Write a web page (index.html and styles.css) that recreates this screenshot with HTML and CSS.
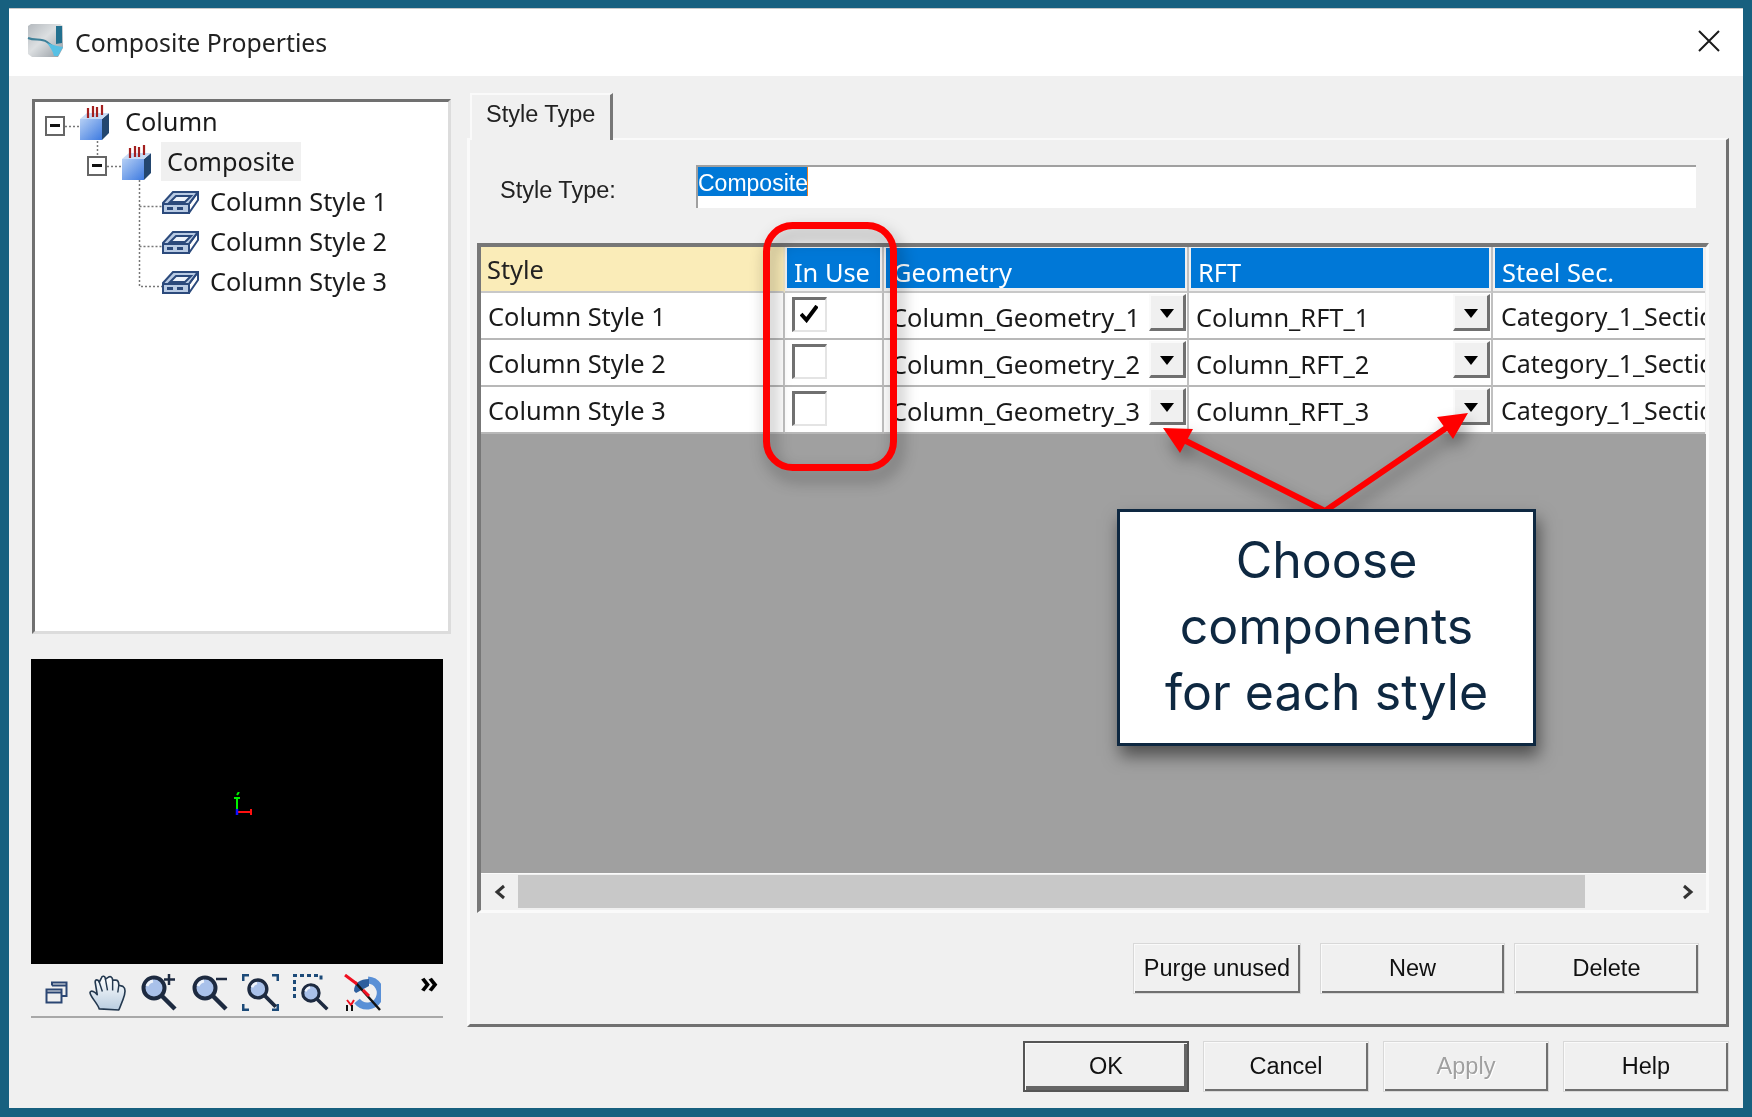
FILE: index.html
```html
<!DOCTYPE html>
<html lang="en">
<head>
<meta charset="utf-8">
<title>Composite Properties</title>
<link rel="stylesheet" href="styles.css">
</head>
<body>
<svg class="defs" width="0" height="0" aria-hidden="true">
  <defs>
    <linearGradient id="cubeFace" x1="0" y1="0" x2="1" y2="1">
      <stop offset="0" stop-color="#b5cff5"/><stop offset="1" stop-color="#3d7ae0"/>
    </linearGradient>
    <linearGradient id="handFill" x1="0" y1="0" x2="0" y2="1">
      <stop offset="0" stop-color="#ffffff"/><stop offset="1" stop-color="#b9cde0"/>
    </linearGradient>
    <linearGradient id="titleFill" x1="0" y1="0" x2="1" y2="1">
      <stop offset="0" stop-color="#b4b9be"/><stop offset=".45" stop-color="#dcdfe1"/><stop offset="1" stop-color="#9299a0"/>
    </linearGradient>
    <symbol id="cube" viewBox="0 0 30 36">
      <path d="M0 14H22V35H0Z" fill="url(#cubeFace)"/>
      <path d="M22 14 29 8V28L22 35Z" fill="#23466f"/>
      <path d="M0 14 7 8H29L22 14Z" fill="#c7dbf5"/>
      <path d="M8 3V13M13 1V12M17 2V12M22 0V10" stroke="#a3201f" stroke-width="2.200" fill="none"/>
    </symbol>
    <symbol id="block" viewBox="0 0 37 23">
      <path d="M1 12 11 1H36L27 13V22H1Z" fill="#b9cbe4" stroke="#2c4a7c" stroke-width="2"/>
      <path d="M27 13H1M27 13 36 1V9L27 22" fill="none" stroke="#2c4a7c" stroke-width="2"/>
      <path d="M8 11 14 5H29L23 11Z" fill="#eef3fa" stroke="#2c4a7c" stroke-width="2"/>
      <path d="M5 16H11V19H5ZM15 16H21V19H15Z" fill="#2c4a7c"/>
    </symbol>
    <symbol id="lens" viewBox="0 0 37 37">
      <circle cx="14" cy="14" r="10.500" fill="#a9c1ea" stroke="#1d2a40" stroke-width="4"/>
      <path d="M7 12A8 8 0 0 1 13 7" stroke="#eef3fb" stroke-width="3" fill="none"/>
      <path d="M22 22 35 35" stroke="#1d2a40" stroke-width="4.500"/>
    </symbol>
  </defs>
</svg>

<main class="window">
  <header class="titlebar">
    <svg class="title-icon" viewBox="0 0 36 35" aria-hidden="true">
      <path d="M1 3 4 1H33L36 3V25L31 34H5L1 31Z" fill="url(#titleFill)"/>
      <path d="M29 3H35V20L29 21Z" fill="#22708f"/>
      <path d="M1 15C8 18 14 15 20 19L28 25" fill="none" stroke="#3d7f98" stroke-width="2"/>
      <path d="M20 20 30 23 36 24 31 33H27C26 28 23 24 20 20Z" fill="#57c0e4"/>
    </svg>
    <h1 class="title-text">Composite Properties</h1>
    <svg class="close-icon" viewBox="0 0 22 22" aria-hidden="true"><path d="M1 1 21 21M21 1 1 21" stroke="#1a1a1a" stroke-width="2"/></svg>
  </header>

  <div class="client">
    <aside class="left-col">
      <div class="tree">
        <svg class="tree-lines" width="200" height="220" viewBox="0 0 200 220" aria-hidden="true">
          <path d="M30 24.500H45M62.500 39V53M72 64.500H87M104.500 78V184.500H127M104.500 104.500H127M104.500 144.500H127" fill="none" stroke="#777" stroke-width="1.500" stroke-dasharray="2 2"/>
        </svg>
        <div class="tree-row level-0">
          <span class="expander"></span>
          <svg class="cube-icon"><use href="#cube"/></svg>
          <span class="tree-label">Column</span>
        </div>
        <div class="tree-row level-1">
          <span class="expander"></span>
          <svg class="cube-icon"><use href="#cube"/></svg>
          <span class="tree-label is-selected">Composite</span>
        </div>
        <div class="tree-row level-2">
          <svg class="block-icon"><use href="#block"/></svg>
          <span class="tree-label">Column Style 1</span>
        </div>
        <div class="tree-row level-2">
          <svg class="block-icon"><use href="#block"/></svg>
          <span class="tree-label">Column Style 2</span>
        </div>
        <div class="tree-row level-2">
          <svg class="block-icon"><use href="#block"/></svg>
          <span class="tree-label">Column Style 3</span>
        </div>
      </div>

      <div class="preview">
        <svg class="axis" viewBox="0 0 40 40" aria-hidden="true">
          <path d="M20 20V6M17 6H23M20 3 22 0" stroke="#00f000" stroke-width="2" fill="none"/>
          <path d="M20 20H34M34 17V23" stroke="#ff1010" stroke-width="2" fill="none"/>
          <path d="M20 17V23" stroke="#1010ff" stroke-width="2.500" fill="none"/>
        </svg>
      </div>

      <div class="toolbar">
        <svg class="tool tool-restore" viewBox="0 0 23 23" aria-hidden="true">
          <path d="M1.500 8.500H16.500V21.500H1.500ZM1.500 11.500H16.500M7 4.500V1.500H21.500V15H17M7 4.500H21.500" fill="none" stroke="#2b4673" stroke-width="2"/>
        </svg>
        <svg class="tool tool-hand" viewBox="0 0 36 36" aria-hidden="true">
          <path d="M10 34C8 28 1 22 1 18C2 15 6 18 8 20L6 8C6 5 9 5 10 8L12 4C13 1 16 2 16 5L19 3C21 2 23 3 23 6L26 6C29 6 29 9 29 11L33 12C36 14 35 20 33 25C31 30 30 33 29 35Z" fill="url(#handFill)" stroke="#23384f" stroke-width="1.600" stroke-linejoin="round"/>
          <path d="M10 8 13 17M16 5 18 16M23 6 23 16M29 11 28 18" fill="none" stroke="#23384f" stroke-width="1.400"/>
        </svg>
        <svg class="tool" viewBox="0 0 37 37" aria-hidden="true">
          <use href="#lens"/><path d="M29 0V11M24 5.500H35" stroke="#1d2a40" stroke-width="2.500"/>
        </svg>
        <svg class="tool" viewBox="0 0 37 37" aria-hidden="true">
          <use href="#lens"/><path d="M25 5H36" stroke="#1d2a40" stroke-width="2.500"/>
        </svg>
        <svg class="tool" viewBox="0 0 37 37" aria-hidden="true">
          <path d="M1 7V1H7M30 1H36V7M1 30V36H7M30 36H36V30" fill="none" stroke="#1c4a78" stroke-width="3"/>
          <g transform="translate(4 3) scale(.85)"><use href="#lens" width="37" height="37"/></g>
        </svg>
        <svg class="tool" viewBox="0 0 37 37" aria-hidden="true">
          <path d="M1.500 24V1.500H28V8" fill="none" stroke="#1c4a78" stroke-width="3" stroke-dasharray="4 3"/>
          <g transform="translate(7 8) scale(.78)"><use href="#lens" width="37" height="37"/></g>
        </svg>
        <svg class="tool" viewBox="0 0 37 37" aria-hidden="true">
          <path d="M24 6A13 13 0 1 1 13 27" fill="none" stroke="#5a90d6" stroke-width="7"/>
          <path d="M10 17C10 9 16 5 25 5V12L12 19Z" fill="#2d5f9e"/>
          <path d="M11 8 36 36" stroke="#111" stroke-width="2.500"/>
          <path d="M1 1 13 10M19 16 25 22" stroke="#f01020" stroke-width="3"/>
          <path d="M3 26 7 31 10 26" stroke="#f01020" stroke-width="2" fill="none"/>
          <path d="M3 31V37M8 31V37" stroke="#111" stroke-width="2"/>
        </svg>
        <span class="chevrons">&#187;</span>
      </div>
    </aside>

    <section class="right-col">
      <div class="tab-strip"><span class="tab">Style Type</span></div>
      <div class="tab-page">
        <div class="field-row">
          <label class="field-label">Style Type:</label>
          <div class="field"><span class="field-sel">Composite</span></div>
        </div>

        <div class="grid-box">
          <div class="grid-table">
            <div class="head head-fixed">Style</div>
            <div class="head"><span class="head-fill">In Use</span></div>
            <div class="head"><span class="head-fill">Geometry</span></div>
            <div class="head"><span class="head-fill">RFT</span></div>
            <div class="head head-last"><span class="head-fill">Steel Sec.</span></div>

            <div class="cell cell-name">Column Style 1</div>
            <div class="cell"><span class="check is-on"><svg viewBox="3 3 18 18" aria-hidden="true"><path d="M4 12 9.500 18 20 4" fill="none" stroke="#000" stroke-width="4"/></svg></span></div>
            <div class="cell cell-combo"><span class="combo-text clipped"><span>Column_Geometry_1</span></span><span class="drop"></span></div>
            <div class="cell cell-combo"><span class="combo-text">Column_RFT_1</span><span class="drop"></span></div>
            <div class="cell cell-last"><span class="cat-text">Category_1_Section</span></div>

            <div class="cell cell-name">Column Style 2</div>
            <div class="cell"><span class="check"></span></div>
            <div class="cell cell-combo"><span class="combo-text clipped"><span>Column_Geometry_2</span></span><span class="drop"></span></div>
            <div class="cell cell-combo"><span class="combo-text">Column_RFT_2</span><span class="drop"></span></div>
            <div class="cell cell-last"><span class="cat-text">Category_1_Section</span></div>

            <div class="cell cell-name">Column Style 3</div>
            <div class="cell"><span class="check"></span></div>
            <div class="cell cell-combo"><span class="combo-text clipped"><span>Column_Geometry_3</span></span><span class="drop"></span></div>
            <div class="cell cell-combo"><span class="combo-text">Column_RFT_3</span><span class="drop"></span></div>
            <div class="cell cell-last"><span class="cat-text">Category_1_Section</span></div>
          </div>
          <div class="grid-empty"></div>
          <div class="scrollbar">
            <span class="scroll-btn"><svg viewBox="0 0 12 16" aria-hidden="true"><path d="M10 2 3 8 10 14" fill="none" stroke="#333" stroke-width="3"/></svg></span>
            <span class="scroll-thumb"></span>
            <span class="scroll-btn"><svg viewBox="0 0 12 16" aria-hidden="true"><path d="M2 2 9 8 2 14" fill="none" stroke="#333" stroke-width="3"/></svg></span>
          </div>
        </div>

        <div class="page-actions">
          <button class="btn btn-purge">Purge unused</button>
          <button class="btn btn-wide">New</button>
          <button class="btn btn-wide">Delete</button>
        </div>
      </div>

      <div class="dialog-actions">
        <button class="btn btn-dlg btn-default">OK</button>
        <button class="btn btn-dlg">Cancel</button>
        <button class="btn btn-dlg is-disabled">Apply</button>
        <button class="btn btn-dlg">Help</button>
      </div>
    </section>
  </div>
</main>

<svg class="annot annot-shadow" viewBox="0 0 1752 1117" aria-hidden="true">
  <rect x="766.500" y="225.500" width="127" height="242" rx="26" fill="none" stroke="#ff0000" stroke-width="7"/>
  <path d="M1325 511 1178 437M1325 511 1452 424" fill="none" stroke="#ff0000" stroke-width="6"/>
  <path d="M1163 428 1193 429 1180 453Z M1468 413 1437 417 1453 439Z" fill="#ff0000"/>
</svg>
<div class="callout">Choose<br>components<br>for each style</div>
</body>
</html>
```
FILE: styles.css
```css
* { box-sizing: border-box; }
html, body { margin: 0; height: 100%; }
body {
  background: #17607f;
  padding: 8px 9px 9px;
  width: 1752px;
  height: 1117px;
  overflow: hidden;
  position: relative;
  font-family: "Noto Sans", sans-serif;
  color: #111;
}
.defs { position: absolute; }

.window {
  width: 1734px;
  height: 1100px;
  background: #f0f0f0;
  display: flex;
  flex-direction: column;
  filter: blur(.45px);
}

.titlebar {
  height: 68px;
  flex: none;
  background: #fff;
  border-top: 1px solid #c8c8c8;
  display: flex;
  align-items: center;
  padding: 0 23px 0 18px;
}
.title-icon { width: 36px; height: 35px; margin-right: 12px; margin-top: -4px; }
.title-text { margin: -2px 0 0; font-size: 24.800px; font-weight: 400; flex: 1; color: #222; }
.close-icon { width: 22px; height: 22px; margin-top: -4px; }

.client {
  flex: 1;
  display: grid;
  grid-template-columns: 420px 1259px;
  column-gap: 19px;
  padding: 17px 14px 16px 22px;
}

/* Left column */
.left-col { display: flex; flex-direction: column; }
.tree {
  position: relative;
  height: 535px;
  margin: 6px 0 0 1px;
  background: #fff;
  border: 3px solid #f5f5f5;
  border-top-color: #707070;
  border-left-color: #707070;
  border-right-color: #dcdcdc;
  border-bottom-color: #dcdcdc;
  font-size: 25.300px;
}
.tree-lines { position: absolute; left: 0; top: 0; }
.tree-row { height: 40px; display: flex; align-items: center; position: relative; }
.level-0 { padding-left: 10px; }
.level-1 { padding-left: 52px; }
.level-2 { padding-left: 127px; }
.expander {
  width: 20px;
  height: 20px;
  margin: 8px 15px 0 0;
  border: 2px solid #666;
  background: #fff;
  position: relative;
}
.expander::after {
  content: "";
  position: absolute;
  left: 3px;
  right: 3px;
  top: 6px;
  height: 3px;
  background: #111;
}
.cube-icon { width: 30px; height: 36px; margin-right: 9px; margin-top: 1px; }
.block-icon { width: 37px; height: 23px; margin-right: 5px; }
.tree-label { padding: 0 6px; line-height: 39px; color: #1a1a1a; margin-top: -1px; }
.is-selected { background: #f0f0f0; }

.preview {
  width: 412px;
  height: 305px;
  margin-top: 25px;
  background: #000;
  display: flex;
  align-items: center;
  justify-content: center;
  flex: none;
}
.axis { width: 40px; height: 40px; margin-left: 0; }

.toolbar {
  width: 412px;
  height: 54px;
  border-bottom: 2px solid #a8a8a8;
  display: flex;
  align-items: flex-start;
  padding: 10px 0 0 14px;
  gap: 14px;
  flex: none;
}
.tool { width: 37px; height: 37px; flex: none; }
.tool-restore { width: 23px; height: 23px; margin: 7px 7px 0 0; }
.chevrons { font-size: 30px; line-height: 16px; font-weight: 700; margin-left: 25px; color: #000; }

/* Right column */
.right-col { display: flex; flex-direction: column; }
.tab-strip { height: 45px; display: flex; flex: none; }
.tab {
  width: 143px;
  background: #f0f0f0;
  border: 2px solid #fafafa;
  border-right: 3px solid #777;
  border-bottom: 0;
  font: 23.500px/39px "Liberation Sans", sans-serif;
  padding-left: 14px;
  color: #222;
  position: relative;
  z-index: 1;
  height: 47px;
}
.tab-page {
  height: 889px;
  flex: none;
  margin-left: -3px;
  background: #f0f0f0;
  border-top: 2px solid #fafafa;
  border-left: 3px solid #fafafa;
  border-right: 3px solid #707070;
  border-bottom: 3px solid #707070;
  padding: 25px 0 0 7px;
  display: flex;
  flex-direction: column;
}
.field-row { display: flex; height: 43px; align-items: center; flex: none; }
.field-label {
  font: 23.500px "Liberation Sans", sans-serif;
  width: 219px;
  padding-left: 23px;
  margin-top: 8px;
  color: #222;
}
.field {
  width: 1000px;
  height: 43px;
  background: #fff;
  border-top: 2px solid #a0a0a0;
  border-left: 2px solid #a0a0a0;
  display: flex;
  align-items: flex-start;
}
.field-sel {
  background: #0078d7;
  color: #fff;
  font: 23px/33px "Liberation Sans", sans-serif;
  height: 29px;
  overflow: hidden;
  width: 110px;
  border-right: 1px solid #f08020;
  white-space: nowrap;
}

.grid-box {
  width: 1232px;
  height: 670px;
  margin-top: 35px;
  border-top: 4px solid #777;
  border-left: 4px solid #777;
  background: #f0f0f0;
  display: flex;
  flex-direction: column;
  flex: none;
  border-right: 3px solid #fafafa;
  border-bottom: 3px solid #fafafa;
}
.grid-table {
  display: grid;
  grid-template-columns: 304px 99px 305px 304px 212px;
  grid-template-rows: 46px 47px 47px 47px;
  flex: none;
  font-size: 25.400px;
}
.head {
  background: #f0f0f0;
  border-right: 2px solid #c0c0c0;
  border-bottom: 2px solid #c8c8c8;
  padding: 1px 2px 3px 2px;
  display: flex;
}
.head-last { border-right: 0; }
.head-fixed {
  background: #faecb8;
  padding: 5px 0 0 6px;
  color: #222;
  border-right-color: #efe6c4;
  display: block;
}
.head-fill {
  flex: 1;
  background: #0078d7;
  color: #fff;
  padding: 7px 0 0 7px;
  line-height: 34px;
  white-space: nowrap;
  overflow: hidden;
}
.cell {
  background: #fff;
  border-right: 2px solid #c0c0c0;
  border-bottom: 2px solid #b8b8b8;
  padding-left: 6px;
  line-height: 47px;
  white-space: nowrap;
  overflow: hidden;
  display: flex;
  color: #1a1a1a;
}
.cell-name { padding-left: 7px; }
.cell-last { border-right: 0; padding-left: 8px; }
.cat-text { display: block; font-size: 25px; }
.cell-combo { justify-content: space-between; padding-top: 1px; padding-right: 0; line-height: 46px; }
.combo-text { display: block; padding-left: 1px; }
.clipped { overflow: hidden; padding-left: 0; margin-left: 4px; }
.clipped span { margin-left: -3px; display: block; }
.drop {
  width: 37px;
  height: 37px;
  margin-right: 1px;
  background: #f0f0f0;
  border-top: 2px solid #fafafa;
  border-left: 2px solid #fafafa;
  border-right: 3px solid #707070;
  border-bottom: 3px solid #707070;
  position: relative;
  flex: none;
}
.drop::after {
  content: "";
  position: absolute;
  left: 9px;
  top: 13px;
  border-left: 7px solid transparent;
  border-right: 7px solid transparent;
  border-top: 9px solid #000;
}
.check {
  width: 35px;
  height: 35px;
  margin: 4px 0 0 1px;
  background: #fff;
  border-top: 3px solid #707070;
  border-left: 3px solid #707070;
  border-right: 2px solid #e4e4e4;
  border-bottom: 2px solid #e4e4e4;
  display: block;
}
.check svg { display: block; width: 18px; height: 18px; margin: 5px 0 0 5px; }

.grid-empty { flex: 1; background: #a0a0a0; }
.scrollbar {
  height: 37px;
  flex: none;
  display: flex;
  padding-top: 1px;
  border-top: 1px solid #fafafa;
  background: #f0f0f0;
}
.scroll-btn { width: 37px; height: 33px; display: flex; align-items: center; justify-content: center; flex: none; }
.scroll-btn svg { width: 12px; height: 16px; }
.scroll-thumb { width: 1067px; height: 33px; background: #c8c8c8; flex: none; }
.scroll-thumb + .scroll-btn { margin-left: 84px; }

.btn {
  font: 23.500px "Liberation Sans", sans-serif;
  color: #111;
  background: #f0f0f0;
  border: 0;
  padding: 0;
  box-shadow: inset 2px 2px 0 #fafafa, inset -3px -3px 0 #707070;
  outline: 1px solid #d8d8d8;
  outline-offset: -1px;
}
.page-actions {
  display: flex;
  justify-content: flex-end;
  margin-top: 30px;
  padding-right: 27px;
  gap: 9px;
  height: 51px;
  flex: none;
}
.btn-purge { width: 168px; margin-right: 10px; }
.btn-wide { width: 185px; }

.dialog-actions {
  display: flex;
  justify-content: flex-end;
  gap: 14px;
  margin-top: 14px;
  height: 51px;
  flex: none;
}
.btn-dlg { width: 166px; }
.btn-default { box-shadow: inset 0 0 0 2px #555, inset 3px 3px 0 #fafafa, inset -5px -6px 0 #666; outline: 0; }
.is-disabled { color: #a0a0a0; text-shadow: 1px 1px 0 #fff; }

/* Annotation overlay */
.annot { position: absolute; left: 0; top: 0; width: 1752px; height: 1117px; pointer-events: none; }
.annot-shadow { filter: drop-shadow(4px 9px 8px rgba(0, 0, 0, .38)); }
.callout {
  position: absolute;
  left: 1117px;
  top: 509px;
  width: 419px;
  height: 237px;
  background: #fff;
  border: 3px solid #0e2841;
  box-shadow: 3px 10px 16px rgba(0, 0, 0, .5);
  color: #0e2841;
  font: 50px/66px "Inter", sans-serif;
  text-align: center;
  padding-top: 15px;
}
```
